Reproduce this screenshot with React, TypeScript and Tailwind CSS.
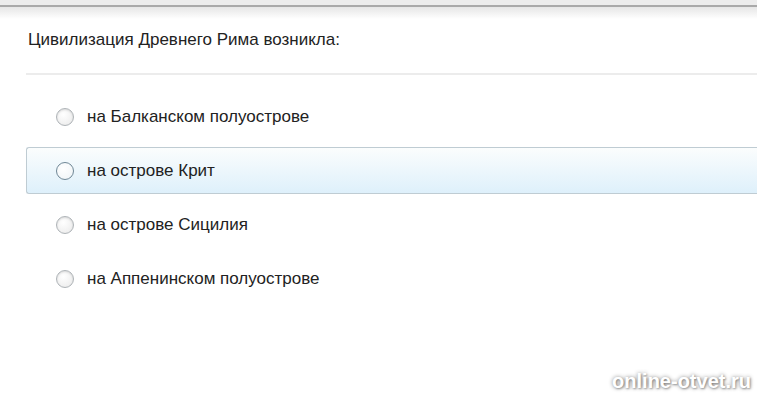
import React from "react";

const options = [
  "на Балканском полуострове",
  "на острове Крит",
  "на острове Сицилия",
  "на Аппенинском полуострове",
];

function Radio({ active }: { active?: boolean }) {
  return (
    <span
      className={
        "block w-[18px] h-[18px] rounded-full border shrink-0 " +
        (active
          ? "border-[#6f8796] border-[1.5px] bg-[radial-gradient(circle_at_40%_35%,#ffffff,#eef3f6)]"
          : "border-[#aeb3b7] bg-[radial-gradient(circle_at_40%_35%,#ffffff,#e9e9e9)] shadow-[inset_0_1px_2px_rgba(0,0,0,0.12)]")
      }
    />
  );
}

export default function App() {
  return (
    <div
      className="relative w-[757px] h-[400px] bg-white overflow-hidden text-[#222]"
      style={{ fontFamily: '"Liberation Sans", Arial, sans-serif' }}
    >
      <div className="h-[5px] bg-[#ececec]" />
      <div className="h-[2px] bg-[#a9a9a9]" />
      <div className="h-[12px] bg-gradient-to-b from-[#e6e6e6] to-white" />
      <div className="pl-[28px] pt-[10px] h-[54px] text-[17px] leading-[22px]">
        Цивилизация Древнего Рима возникла:
      </div>
      <div className="ml-[26px] h-[2px] bg-[#ececec]" />
      <div className="ml-[26px] pt-[18px] flex flex-col">
        {options.map((o, i) => (
          <div
            key={i}
            className={
              "h-[47px] mb-[7px] flex items-center gap-[13px] pl-[29px] text-[17px] " +
              (i === 1
                ? "border border-r-0 border-[#bfccd3] rounded-l-[3px] bg-gradient-to-b from-[#fbfdfd] to-[#def0fb]"
                : "border border-transparent")
            }
          >
            <Radio active={i === 1} />
            <span>{o}</span>
          </div>
        ))}
      </div>
      <div
        className="absolute right-[6px] bottom-[4px] text-[20px] font-bold text-white"
        style={{ textShadow: "0 0 4px rgba(0,0,0,0.45), 1px 1px 2px rgba(0,0,0,0.3)" }}
      >
        online-otvet.ru
      </div>
    </div>
  );
}
